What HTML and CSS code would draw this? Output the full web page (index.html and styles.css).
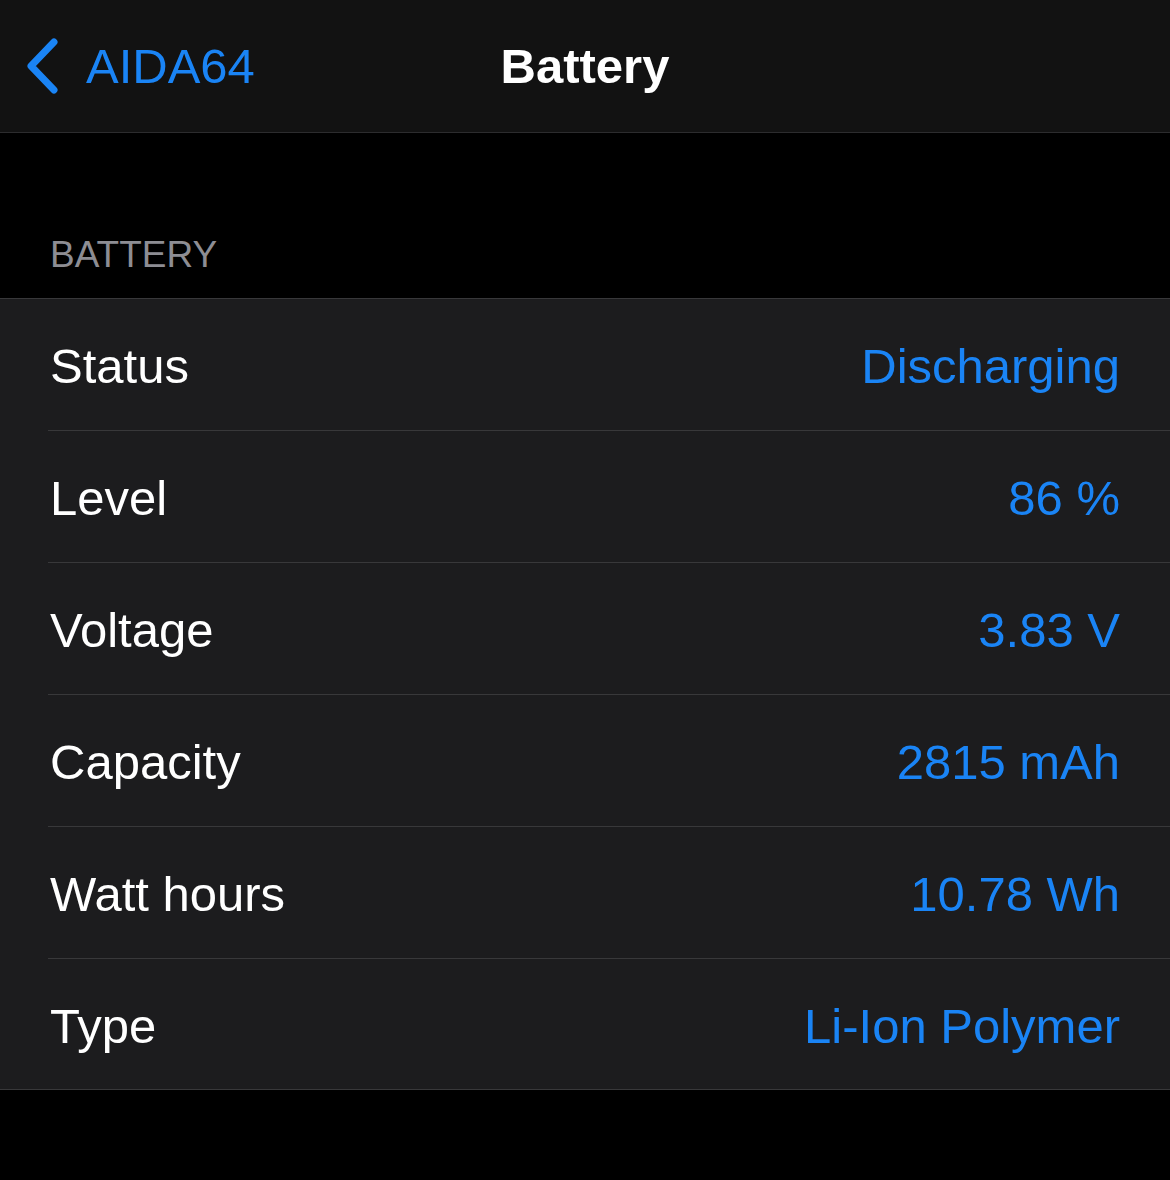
FILE: index.html
```html
<!DOCTYPE html>
<html lang="en">
<head>
	<meta charset="utf-8">
	<title>Battery</title>
	<link rel="stylesheet" href="styles.css">
</head>
<body>
	<div class="navBar">
		<div class="navBack">
			<svg class="chevron" width="36" height="58" viewBox="0 0 36 58">
				<path d="M30 5 L7 29 L30 53" fill="none" stroke="#1a84f5" stroke-width="7" stroke-linecap="round" stroke-linejoin="round"/>
			</svg>
			<span>AIDA64</span>
		</div>
		<div class="navTitle">Battery</div>
		<div></div>
	</div>

	<div class="sectionHead">BATTERY</div>

	<div class="group">
		<div class="row">
			<div class="rowInner">
				<span class="label">Status</span>
				<span class="value">Discharging</span>
			</div>
		</div>
		<div class="row">
			<div class="rowInner">
				<span class="label">Level</span>
				<span class="value">86 %</span>
			</div>
		</div>
		<div class="row">
			<div class="rowInner">
				<span class="label">Voltage</span>
				<span class="value">3.83 V</span>
			</div>
		</div>
		<div class="row">
			<div class="rowInner">
				<span class="label">Capacity</span>
				<span class="value">2815 mAh</span>
			</div>
		</div>
		<div class="row">
			<div class="rowInner">
				<span class="label">Watt hours</span>
				<span class="value">10.78 Wh</span>
			</div>
		</div>
		<div class="row">
			<div class="rowInner">
				<span class="label">Type</span>
				<span class="value">Li-Ion Polymer</span>
			</div>
		</div>
	</div>
</body>
</html>
```

FILE: styles.css
```css
*, *:after, *:before {
	box-sizing: border-box;
}
html, body {
	margin: 0;
	background: #000;
	font-family: "Liberation Sans", Arial, sans-serif;
	color: #fff;
}
.navBar {
	display: grid;
	grid-template-columns: 1fr auto 1fr;
	align-items: center;
	height: 133px;
	background: #121212;
	border-bottom: 1px solid #2c2c2e;
}
.navBack {
	display: flex;
	align-items: center;
	gap: 26px;
	padding-left: 24px;
	color: #1a84f5;
	font-size: 49px;
}
.chevron {
	display: block;
}
.navTitle {
	font-size: 49px;
	font-weight: bold;
}
.sectionHead {
	height: 165px;
	display: flex;
	align-items: flex-end;
	padding: 0 0 22px 50px;
	color: #8d8d93;
	font-size: 37px;
}
.group {
	background: #1c1c1e;
	border-top: 1px solid #38383a;
	border-bottom: 1px solid #38383a;
}
.row {
	padding-left: 48px;
}
.rowInner {
	display: flex;
	align-items: center;
	justify-content: space-between;
	height: 132px;
	padding: 3px 50px 0 2px;
	border-bottom: 1px solid #38383a;
	font-size: 49px;
}
.row:last-child .rowInner {
	border-bottom: none;
	height: 130px;
}
.value {
	color: #1a84f5;
}
```
